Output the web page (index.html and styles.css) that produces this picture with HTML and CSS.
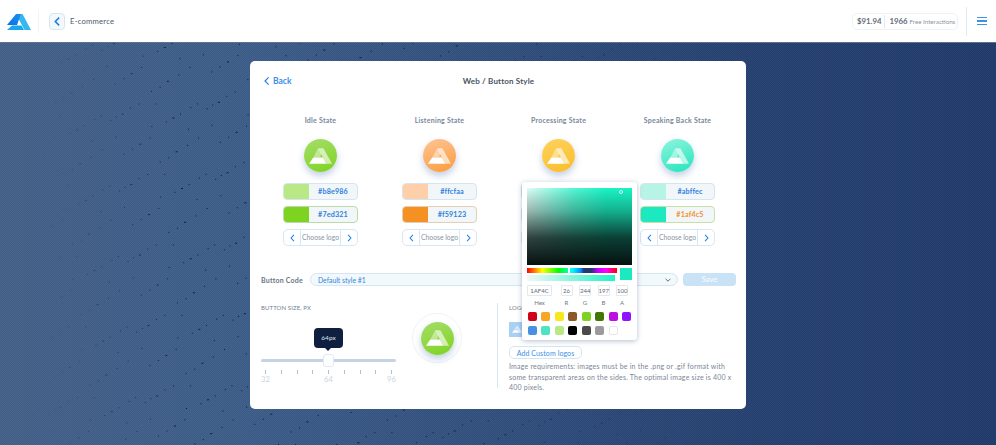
FILE: index.html
```html
<!DOCTYPE html>
<html lang="en">
<head>
  <meta charset="UTF-8">
  <title>Web / Button Style</title>
  <link rel="stylesheet" href="styles.css">
</head>
<body>

<svg class="defs" width="0" height="0">
  <defs>
    <linearGradient id="logoBlue" x1="0" y1="1" x2="1" y2="0">
      <stop offset="0" stop-color="#0f6fe0"/>
      <stop offset="1" stop-color="#1c8ff0"/>
    </linearGradient>
    <symbol id="mark" viewBox="0 0 24 16">
      <path d="M9.500 0h5.500L24 16h-6z" fill="#fff" fill-opacity=".62"/>
      <path d="M9.500 0 13 5 11.500 9.500H4.500z" fill="#fff" fill-opacity=".42"/>
      <path d="M4.500 9.500h10L18 16H0z" fill="#fff"/>
    </symbol>
    <symbol id="chev-left" viewBox="0 0 6 10">
      <path d="M4.800 1 1.200 5l3.600 4" fill="none" stroke="#1c7fe6" stroke-width="1.300"/>
    </symbol>
    <symbol id="chev-right" viewBox="0 0 6 10">
      <path d="M1.200 1 4.800 5 1.200 9" fill="none" stroke="#1c7fe6" stroke-width="1.300"/>
    </symbol>
    <pattern id="streaks" width="97" height="71" patternUnits="userSpaceOnUse" patternTransform="rotate(-7)">
      <rect x="3" y="19" width="1" height="1"/>
      <rect x="9" y="16" width="1" height="1"/>
      <rect x="15" y="14" width="2" height="1"/>
      <rect x="24" y="9" width="1" height="1"/>
      <rect x="33" y="6" width="1" height="1"/>
      <rect x="58" y="27" width="1" height="1"/>
      <rect x="65" y="24" width="2" height="1"/>
      <rect x="73" y="21" width="1" height="1"/>
      <rect x="84" y="16" width="1" height="1"/>
      <rect x="91" y="13" width="1" height="1"/>
      <rect x="12" y="54" width="1" height="1"/>
      <rect x="21" y="50" width="1" height="1"/>
      <rect x="29" y="46" width="2" height="1"/>
      <rect x="40" y="41" width="1" height="1"/>
      <rect x="47" y="66" width="1" height="1"/>
      <rect x="56" y="63" width="1" height="1"/>
      <rect x="64" y="58" width="2" height="1"/>
      <rect x="76" y="53" width="1" height="1"/>
      <rect x="88" y="47" width="1" height="1"/>
      <rect x="50" y="8" width="1" height="1"/>
      <rect x="43" y="30" width="1" height="1"/>
      <rect x="6" y="36" width="1" height="1"/>
      <rect x="79" y="37" width="1" height="1"/>
    </pattern>
  </defs>
</svg>

<header class="topbar">
  <div class="topbar-left">
    <svg class="logo" viewBox="0 0 24 16">
      <path d="M9 0h6.500L24 16h-6.500z" fill="#35b8ee"/>
      <path d="M9 0h5L10 11H0z" fill="url(#logoBlue)"/>
      <path d="M5 11.500h9.500L17 16H0z" fill="#1aa6ea"/>
    </svg>
    <span class="topbar-sep"></span>
    <button class="back-square">
      <svg viewBox="0 0 10 10"><path d="M6.500 1.500 3 5l3.500 3.500" /></svg>
    </button>
    <span class="crumb">E-commerce</span>
  </div>
  <div class="topbar-right">
    <div class="balance">
      <b>$91.94</b>
      <i></i>
      <b>1966</b>
      <span>Free Interactions</span>
    </div>
    <span class="topbar-sep tall"></span>
    <div class="burger"><i></i><i></i><i></i></div>
  </div>
</header>

<main class="stage">
  <svg class="texture" width="996" height="403"><rect width="996" height="403" fill="url(#streaks)"/></svg>
  <section class="card">
    <div class="card-head">
      <a class="back-link">
        <svg viewBox="0 0 10 12"><path d="M7 1.500 2.500 6 7 10.500" /></svg>
        Back
      </a>
      <h1>Web / Button Style</h1>
    </div>

    <div class="states">
      <div class="state">
        <h3>Idle State</h3>
        <div class="orb orb-green"><svg><use href="#mark"/></svg></div>
        <div class="field"><span class="chip c-b8e986"></span><span class="hex">#b8e986</span></div>
        <div class="field active-green"><span class="chip c-7ed321"></span><span class="hex">#7ed321</span></div>
        <div class="chooser">
          <span class="arrow"><svg><use href="#chev-left"/></svg></span>
          <span class="choose">Choose logo</span>
          <span class="arrow"><svg><use href="#chev-right"/></svg></span>
        </div>
      </div>
      <div class="state">
        <h3>Listening State</h3>
        <div class="orb orb-orange"><svg><use href="#mark"/></svg></div>
        <div class="field"><span class="chip c-ffcfaa"></span><span class="hex">#ffcfaa</span></div>
        <div class="field active-orange"><span class="chip c-f59123"></span><span class="hex">#f59123</span></div>
        <div class="chooser">
          <span class="arrow"><svg><use href="#chev-left"/></svg></span>
          <span class="choose">Choose logo</span>
          <span class="arrow"><svg><use href="#chev-right"/></svg></span>
        </div>
      </div>
      <div class="state">
        <h3>Processing State</h3>
        <div class="orb orb-yellow"><svg><use href="#mark"/></svg></div>
        <div class="field"><span class="chip c-ffe58f"></span><span class="hex">#ffe58f</span></div>
        <div class="field"><span class="chip c-f8c01c"></span><span class="hex">#f8c01c</span></div>
        <div class="chooser">
          <span class="arrow"><svg><use href="#chev-left"/></svg></span>
          <span class="choose">Choose logo</span>
          <span class="arrow"><svg><use href="#chev-right"/></svg></span>
        </div>
      </div>
      <div class="state">
        <h3>Speaking Back State</h3>
        <div class="orb orb-teal"><svg><use href="#mark"/></svg></div>
        <div class="field"><span class="chip c-abffec"></span><span class="hex">#abffec</span></div>
        <div class="field active-edit"><span class="chip c-1af4c5"></span><span class="hex edit">#1af4c5</span></div>
        <div class="chooser">
          <span class="arrow"><svg><use href="#chev-left"/></svg></span>
          <span class="choose">Choose logo</span>
          <span class="arrow"><svg><use href="#chev-right"/></svg></span>
        </div>
      </div>
    </div>

    <div class="code-row">
      <label>Button Code</label>
      <div class="select">
        <span>Default style #1</span>
        <svg viewBox="0 0 10 6"><path d="M1 1l4 4 4-4" /></svg>
      </div>
      <button class="save">Save</button>
    </div>

    <div class="lower">
      <div class="size-col">
        <h4>BUTTON SIZE, PX</h4>
        <div class="slider">
          <div class="tooltip">64px</div>
          <div class="track"><span class="thumb"></span></div>
          <div class="ticks">
            <i></i><i></i><i></i><i></i><i></i><i></i><i></i><i></i><i></i>
          </div>
          <div class="scale"><span>32</span><span>64</span><span>96</span></div>
        </div>
      </div>
      <div class="preview-col">
        <div class="ring"><div class="orb orb-green flat"><svg><use href="#mark"/></svg></div></div>
      </div>
      <div class="logos-col">
        <h4>LOGOS</h4>
        <div class="logo-tiles">
          <span class="tile"><svg><use href="#mark"/></svg></span>
        </div>
        <button class="add-logos">Add Custom logos</button>
        <p>Image requirements: images must be in the .png or .gif format with some transparent areas on the sides. The optimal image size is 400 x 400 pixels.</p>
      </div>
    </div>

    <!-- Color picker popup -->
    <div class="picker">
      <div class="sat-box"><span class="sat-dot"></span></div>
      <div class="bars">
        <div class="bars-stack">
          <div class="hue"><span></span></div>
          <div class="alpha"><span></span></div>
        </div>
        <div class="current"></div>
      </div>
      <div class="inputs">
        <div class="in hexin"><span>1AF4C</span><label>Hex</label></div>
        <div class="in"><span>26</span><label>R</label></div>
        <div class="in"><span>244</span><label>G</label></div>
        <div class="in"><span>197</span><label>B</label></div>
        <div class="in"><span>100</span><label>A</label></div>
      </div>
      <div class="presets">
        <i class="p-red"></i><i class="p-orange"></i><i class="p-yellow"></i><i class="p-brown"></i>
        <i class="p-lime"></i><i class="p-forest"></i><i class="p-magenta"></i><i class="p-violet"></i>
        <i class="p-blue"></i><i class="p-teal"></i><i class="p-pale"></i><i class="p-black"></i>
        <i class="p-dark"></i><i class="p-gray"></i><i class="p-white"></i>
      </div>
    </div>
  </section>
</main>

</body>
</html>
```

FILE: styles.css
```css
* {
  box-sizing: border-box;
}
body {
  margin: 0;
  width: 996px;
  height: 445px;
  overflow: hidden;
  font-family: Lato, "Open Sans", sans-serif;
  color: #5d6b7d;
  background: #fff;
}
.defs {
  display: block;
  height: 0;
}
button {
  font-family: inherit;
}

/* Top bar */
.topbar {
  height: 42px;
  display: flex;
  align-items: center;
  justify-content: space-between;
  background: #fff;
  padding: 0 9px 0 7px;
}
.topbar-left,
.topbar-right {
  display: flex;
  align-items: center;
}
.logo {
  width: 24px;
  height: 16px;
  margin-top: 1px;
}
.topbar-sep {
  width: 1px;
  height: 24px;
  margin: 0 10px 0 7px;
  background: #eef4f9;
}
.topbar-sep.tall {
  width: 1px;
  height: 29px;
  margin: 0 10px 0 8px;
  background: #dcebf7;
}
.back-square {
  width: 16px;
  height: 17px;
  padding: 0;
  display: flex;
  align-items: center;
  justify-content: center;
  background: #f2f8fc;
  border: 1px solid #d5e6f3;
  border-radius: 4px;
}
.back-square svg {
  width: 11px;
  height: 11px;
}
.back-square path,
.back-link path {
  fill: none;
  stroke: #1c7fe6;
  stroke-width: 1.400;
}
.crumb {
  margin-left: 5px;
  font-size: 7.700px;
  letter-spacing: .2px;
  color: #4e5b6c;
}
.balance {
  width: 106px;
  height: 17px;
  padding-left: 4px;
  display: flex;
  align-items: center;
  gap: 2px;
  border: 1px solid #edf2f6;
  border-radius: 5px;
  font-size: 6.200px;
  white-space: nowrap;
  color: #8a95a3;
}
.balance b {
  font-size: 7.800px;
  font-weight: 700;
  color: #5f6b7a;
}
.balance i {
  width: 1px;
  height: 13px;
  margin: 0 2px 0 1px;
  background: #e2e9ef;
}
.burger {
  width: 10px;
  display: flex;
  flex-direction: column;
  gap: 2px;
}
.burger i {
  height: 1.500px;
  background: #3b93e8;
}

/* Background */
.stage {
  position: relative;
  height: 403px;
  padding: 18px 0 0 250px;
  background:
    repeating-conic-gradient(rgba(120, 150, 230, .08) 0 25%, rgba(0, 0, 20, .05) 0 50%) 0 0 / 2px 2px,
    linear-gradient(90deg, #456288 0%, #3e5e88 25%, #26416f 75%, #213a69 100%);
  border-top: 1px solid #5b7391;
}
.texture {
  position: absolute;
  left: 0;
  top: 0;
  fill: #5a1fe0;
  opacity: .7;
  shape-rendering: crispEdges;
  -webkit-mask-image: linear-gradient(to right, transparent 3%, #000 18%, #000 45%, transparent 72%);
  mask-image: linear-gradient(to right, transparent 3%, #000 18%, #000 45%, transparent 72%);
}

/* Card */
.card {
  position: relative;
  width: 496px;
  height: 348px;
  padding: 0 10px 0 11px;
  background: #fff;
  border-radius: 5px;
}
.card-head {
  position: relative;
  height: 39px;
  padding-top: 14px;
  text-align: center;
}
.card-head h1 {
  margin: 0;
  font-size: 8px;
  line-height: 12px;
  font-weight: 700;
  letter-spacing: .15px;
  color: #4b5563;
}
.back-link {
  position: absolute;
  left: 2px;
  top: 14px;
  display: flex;
  align-items: center;
  gap: 2px;
  font-size: 8.500px;
  line-height: 12px;
  font-weight: 700;
  color: #3a8fe8;
}
.back-link svg {
  width: 8px;
  height: 10px;
}

/* State columns */
.states {
  display: grid;
  grid-template-columns: repeat(4, 119px);
  width: 476px;
}
.state {
  display: flex;
  flex-direction: column;
  align-items: center;
}
.state h3 {
  margin: 15px 0 13px;
  font-size: 7px;
  line-height: 11px;
  font-weight: 700;
  letter-spacing: .25px;
  color: #7a889a;
}
.orb {
  width: 33px;
  height: 33px;
  margin-bottom: 11px;
  display: flex;
  align-items: center;
  justify-content: center;
  border-radius: 50%;
  box-shadow: 0 4px 7px rgba(60, 100, 170, .3);
}
.orb svg {
  width: 23px;
  height: 16px;
}
.orb-green {
  background: linear-gradient(160deg, #a5dd6b, #7ed321);
}
.orb-orange {
  background: linear-gradient(160deg, #ffc494, #f99c3c);
}
.orb-yellow {
  background: linear-gradient(160deg, #ffd25e, #f9bd2b);
}
.orb-teal {
  background: linear-gradient(160deg, #8ff5de, #23e4bb);
}
.field {
  width: 75px;
  height: 17px;
  margin-bottom: 6px;
  display: flex;
  overflow: hidden;
  background: #f1f6f9;
  border: 1px solid #d5e5f0;
  border-radius: 4px;
}
.active-green {
  border-color: #bcd9ae;
}
.active-orange {
  border-color: #e6cdb5;
}
.active-edit {
  border-color: #c9dfa8;
}
.chip {
  width: 25px;
  flex: none;
}
.c-b8e986 { background: #b8e986; }
.c-7ed321 { background: #7ed321; }
.c-ffcfaa { background: #ffcfaa; }
.c-f59123 { background: #f59123; }
.c-ffe58f { background: #ffe58f; }
.c-f8c01c { background: #f8c01c; }
.c-abffec { background: #b6f4e6; }
.c-1af4c5 { background: #1ce9bf; }
.hex {
  flex: 1;
  text-align: center;
  font-size: 7.200px;
  line-height: 15px;
  font-weight: 700;
  letter-spacing: .15px;
  color: #2f7fdc;
}
.hex.edit {
  color: #f2902c;
}
.chooser {
  width: 75px;
  height: 17px;
  display: flex;
  align-items: center;
  border: 1px solid #d5e8f5;
  border-radius: 5px;
  background: #fff;
}
.arrow {
  width: 16px;
  height: 15px;
  flex: none;
  display: flex;
  align-items: center;
  justify-content: center;
}
.arrow svg {
  width: 5px;
  height: 8px;
}
.choose {
  flex: 1;
  height: 15px;
  border-left: 1px solid #d5e8f5;
  border-right: 1px solid #d5e8f5;
  text-align: center;
  font-size: 6.800px;
  line-height: 15px;
  white-space: nowrap;
  color: #8a94a1;
}

/* Button code row */
.code-row {
  display: flex;
  align-items: center;
  margin-top: 27px;
}
.code-row label {
  width: 49px;
  font-size: 7px;
  font-weight: 700;
  letter-spacing: .2px;
  color: #6a7686;
}
.select {
  width: 368px;
  height: 13px;
  padding: 0 6px 0 7px;
  display: flex;
  align-items: center;
  justify-content: space-between;
  background: #f3f8fb;
  border: 1px solid #d2e6f3;
  border-radius: 7px;
  font-size: 6.800px;
  color: #2f86e4;
}
.select svg {
  width: 6px;
  height: 4px;
}
.select path {
  fill: none;
  stroke: #3a4654;
  stroke-width: 1.300;
}
.save {
  width: 53px;
  height: 13px;
  margin-left: 5px;
  padding: 0;
  border: none;
  border-radius: 4px;
  background: #c9e2f6;
  color: #f3f9fd;
  font-size: 7.500px;
  font-weight: 700;
}

/* Lower part */
.lower {
  display: grid;
  grid-template-columns: 135px 102px 1fr;
  margin-top: 17px;
}
h4 {
  margin: 0;
  font-size: 6px;
  line-height: 10px;
  font-weight: 400;
  letter-spacing: .1px;
  color: #737f8e;
}
.slider {
  position: relative;
  padding-top: 46px;
}
.tooltip {
  position: absolute;
  left: 53px;
  top: 15px;
  width: 29px;
  height: 20px;
  text-align: center;
  font-size: 6.500px;
  line-height: 20px;
  color: #dfe6ee;
  background: #0e1f40;
  border-radius: 4px;
}
.tooltip::after {
  content: "";
  position: absolute;
  left: 11px;
  bottom: -3px;
  border: 3.500px solid transparent;
  border-bottom: 0;
  border-top-color: #0e1f40;
}
.track {
  position: relative;
  height: 3px;
  background: #c3d3e3;
  border-radius: 2px;
}
.thumb {
  position: absolute;
  left: 62px;
  top: -5px;
  width: 11px;
  height: 13px;
  background: #fff;
  border: 1px solid #dfe9f0;
  border-radius: 3px;
}
.ticks {
  display: flex;
  justify-content: space-between;
  padding: 0 4px;
  margin-top: 8px;
}
.ticks i {
  width: 1px;
  height: 4px;
  background: #b3c1cd;
}
.scale {
  display: flex;
  justify-content: space-between;
  margin-top: 1px;
  font-size: 7.500px;
  line-height: 10px;
  letter-spacing: .2px;
  color: #c9d5df;
}
.preview-col {
  padding: 10px 0 0 16px;
}
.ring {
  width: 50px;
  height: 50px;
  display: flex;
  align-items: center;
  justify-content: center;
  border: 1px solid #ecf4f8;
  border-radius: 50%;
}
.orb.flat {
  margin: 0;
}
.logos-col {
  height: 85px;
  padding: 0 0 0 11px;
  border-left: 1px solid #d6e7f3;
  margin-left: -1px;
}
.logo-tiles {
  height: 15px;
  margin: 9px 0 9px;
}
.tile {
  display: flex;
  width: 16px;
  height: 15px;
  align-items: center;
  justify-content: center;
  background: #a9d0f5;
}
.tile svg {
  width: 10px;
  height: 7px;
}
.add-logos {
  display: block;
  width: 73px;
  height: 13px;
  padding: 0;
  background: #fff;
  border: 1px solid #d5e6f3;
  border-radius: 5px;
  font-size: 7px;
  letter-spacing: .1px;
  color: #3a8fe8;
}
.logos-col p {
  margin: 2px 0 0;
  font-size: 7px;
  line-height: 10.500px;
  letter-spacing: .2px;
  color: #7a8696;
}

/* Color picker */
.picker {
  position: absolute;
  left: 272px;
  top: 121px;
  width: 115px;
  height: 158px;
  padding: 6px 5px 0;
  background: #fff;
  border-radius: 3px;
  box-shadow: 0 1px 5px rgba(40, 70, 110, .35);
}
.sat-box {
  position: relative;
  height: 77px;
  background:
    linear-gradient(to top, #061210 0%, rgba(6, 18, 16, .8) 35%, rgba(6, 18, 16, .3) 70%, rgba(6, 18, 16, 0) 100%),
    linear-gradient(to right, rgba(255, 255, 255, .85), rgba(255, 255, 255, .25) 45%, rgba(255, 255, 255, 0) 75%),
    #1af4c5;
}
.sat-dot {
  position: absolute;
  right: 9px;
  top: 2px;
  width: 4px;
  height: 4px;
  border: 1px solid #e5f5f0;
  border-radius: 50%;
}
.bars {
  display: flex;
  justify-content: space-between;
  margin-top: 3px;
}
.bars-stack {
  width: 90px;
}
.hue {
  position: relative;
  height: 5px;
  background: linear-gradient(to right, #f00 0%, #ff0 17%, #0f0 35%, #0ff 50%, #08f 60%, #25386f 63%, #25386f 72%, #b0f 78%, #f0f 88%, #f00 100%);
}
.hue span {
  position: absolute;
  left: 41px;
  top: 0;
  width: 2px;
  height: 5px;
  background: #fff;
}
.alpha {
  position: relative;
  height: 6px;
  margin-top: 2px;
  background: linear-gradient(to right, #f2f7f6, #1af4c5);
}
.alpha span {
  position: absolute;
  right: 0;
  top: 0;
  width: 2px;
  height: 6px;
  background: #fff;
}
.current {
  width: 12px;
  height: 12px;
  background: #1ce9bf;
}
.inputs {
  display: flex;
  margin-top: 4px;
}
.in {
  width: 12px;
  margin-left: 6.500px;
  text-align: center;
}
.in.hexin {
  width: 25px;
  margin: 0 2px 0 0;
}
.in span {
  display: block;
  height: 11px;
  font-size: 6px;
  line-height: 10px;
  color: #5e6975;
  border: 1px solid #e4e8ec;
  border-radius: 1px;
}
.in label {
  display: block;
  margin-top: 3px;
  font-size: 6px;
  line-height: 8px;
  color: #6d7884;
}
.presets {
  display: grid;
  grid-template-columns: repeat(8, 9px);
  gap: 4.500px;
  margin: 2px 0 0 0;
  padding: 3px 0 0 0;
  justify-content: center;
}
.presets i {
  height: 9px;
  border-radius: 2px;
}
.p-red { background: #d0021b; }
.p-orange { background: #f5a623; }
.p-yellow { background: #f8e71c; }
.p-brown { background: #8b572a; }
.p-lime { background: #7ed321; }
.p-forest { background: #417505; }
.p-magenta { background: #bd10e0; }
.p-violet { background: #9013fe; }
.p-blue { background: #4a90e2; }
.p-teal { background: #50e3c2; }
.p-pale { background: #b8e986; }
.p-black { background: #000; }
.p-dark { background: #4a4a4a; }
.p-gray { background: #9b9b9b; }
.p-white { background: #fff; border: 1px solid #e4e8ec; }
```
